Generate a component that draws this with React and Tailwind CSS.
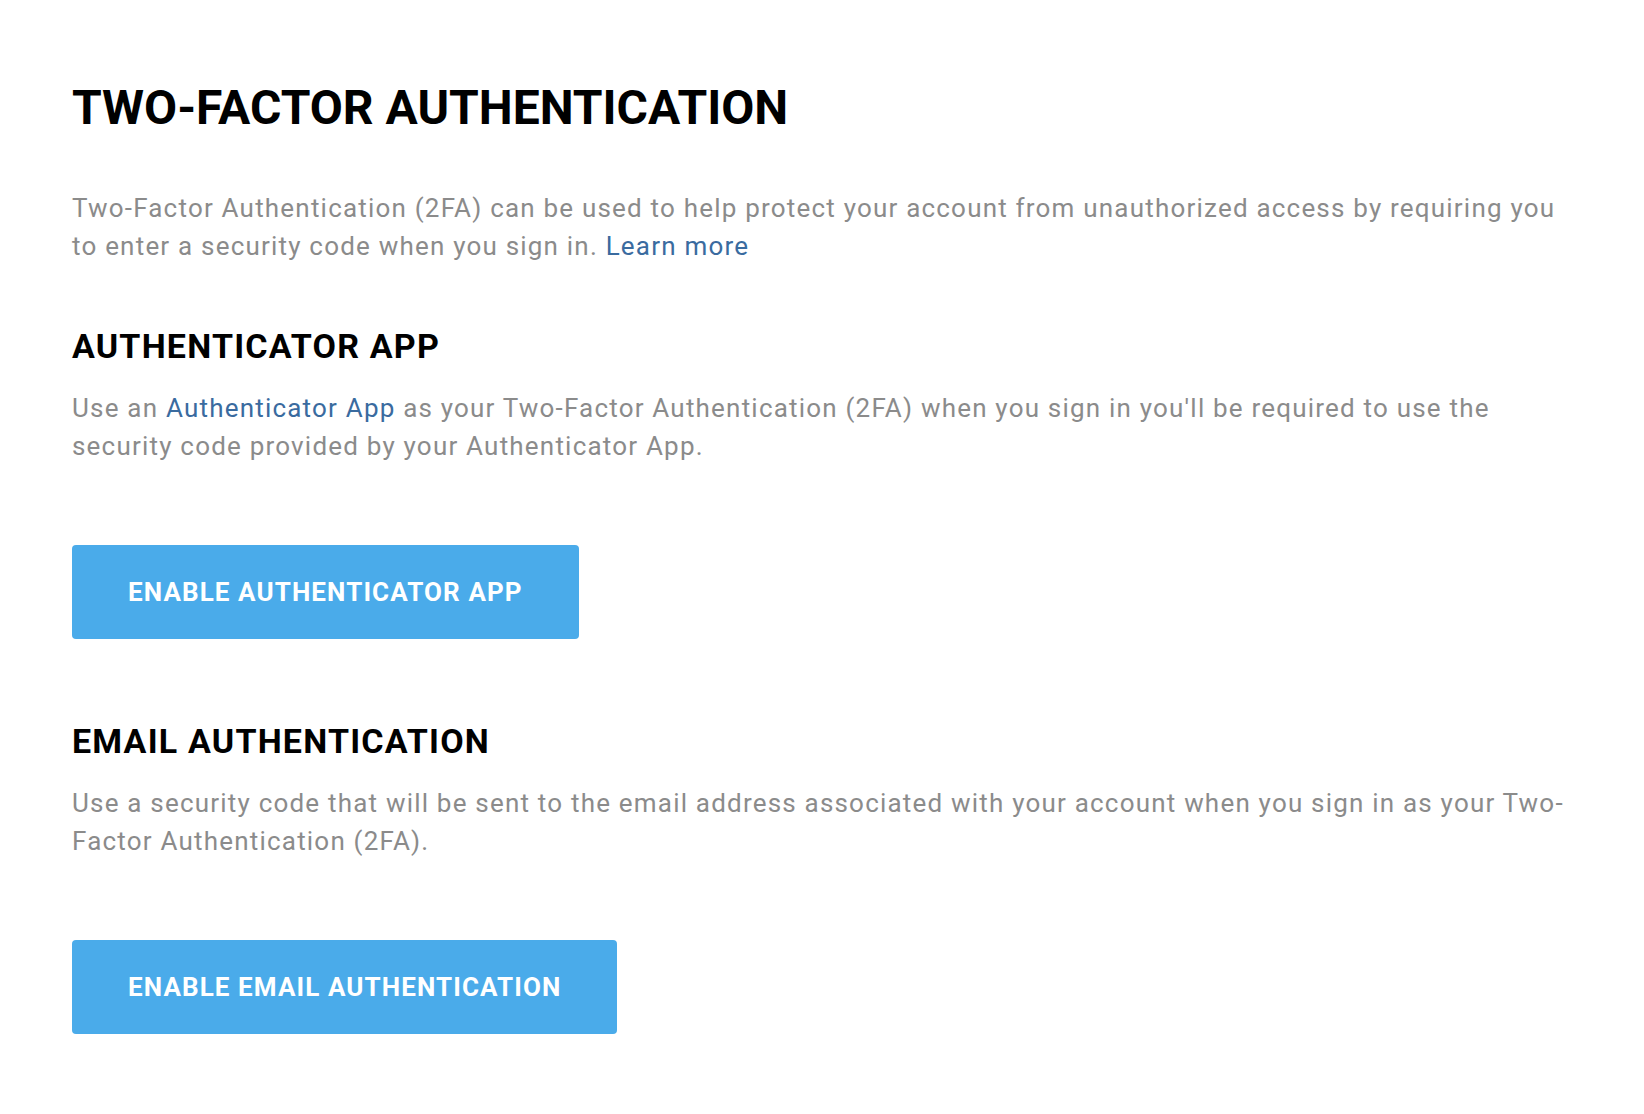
import React from 'react';

const font = { fontFamily: 'Roboto, "Liberation Sans", sans-serif' };

function Section({ title, children, button, gap }) {
  return (
    <section className={gap}>
      <h2 className="text-[34px] font-bold leading-[40px] tracking-[1.2px] text-black">{title}</h2>
      <p className="mt-[23px] text-[26px] leading-[38px] tracking-[1.2px] text-[#8b8b8b]">{children}</p>
      <button className="mt-[80px] h-[94px] rounded-[4px] bg-[#4aabea] px-[56px] text-[26px] font-bold tracking-[1.1px] text-white">
        {button}
      </button>
    </section>
  );
}

export default function App() {
  return (
    <div className="min-h-screen bg-white pl-[72px] pt-[80px]" style={font}>
      <div className="w-[1508px]">
        <h1 className="text-[48px] font-bold leading-[56px] text-black">TWO-FACTOR AUTHENTICATION</h1>
        <p className="mt-[53px] text-[26px] leading-[38px] tracking-[1.2px] text-[#8b8b8b]">
          Two-Factor Authentication (2FA) can be used to help protect your account from unauthorized access by requiring you to enter a security code when you sign in.{' '}
          <a className="text-[#3a6b9f]" href="#">Learn more</a>
        </p>
        <Section gap="mt-[61px]" title="AUTHENTICATOR APP" button="ENABLE AUTHENTICATOR APP">
          Use an <a className="text-[#3a6b9f]" href="#">Authenticator App</a> as your Two-Factor Authentication (2FA) when you sign in you'll be required to use the security code provided by your Authenticator App.
        </Section>
        <Section gap="mt-[82px]" title="EMAIL AUTHENTICATION" button="ENABLE EMAIL AUTHENTICATION">
          Use a security code that will be sent to the email address associated with your account when you sign in as your Two-Factor Authentication (2FA).
        </Section>
      </div>
    </div>
  );
}
